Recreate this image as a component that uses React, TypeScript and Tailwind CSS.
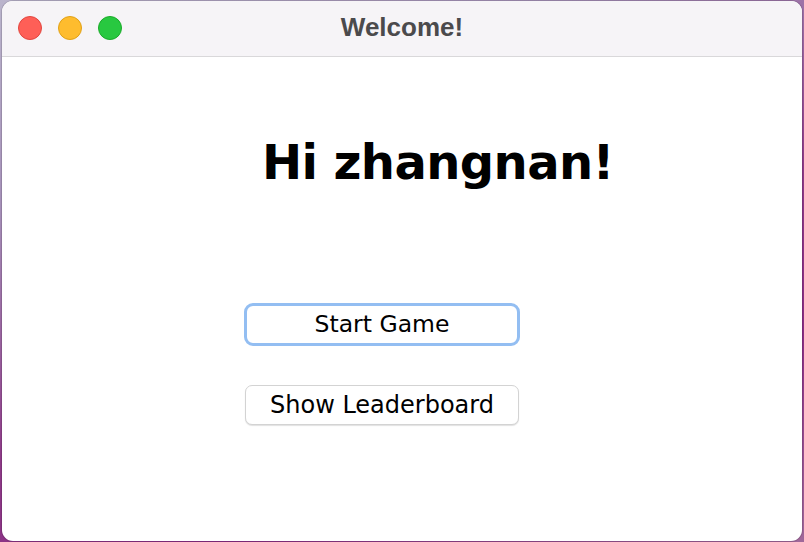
import React from "react";

export default function App() {
  return (
    <div className="w-[804px] h-[542px] overflow-hidden bg-[linear-gradient(160deg,#bab4cc_0%,#a58fb8_25%,#8e3a88_55%,#8a2d84_75%,#a0689a_100%)] pt-px pl-[2px]">
      <div className="w-[800px] h-[540px] rounded-[11px] bg-white overflow-hidden flex flex-col shadow-[0_0_0_1px_rgba(0,0,0,0.12)]">
        <div className="relative h-[56px] shrink-0 bg-[#f6f4f7] border-b border-[#d9d8da] flex items-center justify-center pb-[3px]">
          <div className="absolute left-[16px] top-[15px] flex gap-[16px]">
            <div className="w-[24px] h-[24px] rounded-full bg-[#fe5f57] border border-[#e2463f]" />
            <div className="w-[24px] h-[24px] rounded-full bg-[#febc2e] border border-[#e1a116]" />
            <div className="w-[24px] h-[24px] rounded-full bg-[#28c840] border border-[#1aab29]" />
          </div>
          <span className="text-[26px] font-bold text-[#4b4a4c] font-['Liberation_Sans',Arial,sans-serif] leading-none">
            Welcome!
          </span>
        </div>
        <div className="flex flex-col items-start pt-[81px] font-['DejaVu_Sans',sans-serif]">
          <h1 className="ml-[260px] text-[48px] leading-none font-bold text-black tracking-[-0.6px]">
            Hi zhangnan!
          </h1>
          <button className="ml-[242px] mt-[117px] w-[276px] h-[43px] rounded-[9px] border-[3px] border-[#93bef2] bg-white text-[23.5px] text-black leading-none flex items-center justify-center">
            Start Game
          </button>
          <button className="ml-[243px] mt-[39px] w-[274px] h-[40px] rounded-[7px] border border-[#d3d3d3] bg-white shadow-[0_1px_1px_rgba(0,0,0,0.12)] text-[24px] text-black leading-none flex items-center justify-center">
            Show Leaderboard
          </button>
        </div>
      </div>
    </div>
  );
}
